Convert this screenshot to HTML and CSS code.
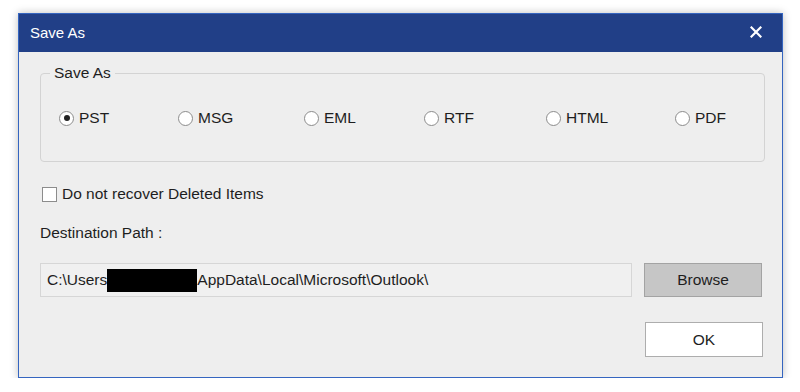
FILE: index.html
```html
<!DOCTYPE html>
<html lang="en">
<head>
    <meta charset="UTF-8">
    <title>Save As</title>
    <link rel="stylesheet" href="styles.css">
</head>
<body>

    <div class="window">
        <div class="titlebar">
            <span class="title">Save As</span>
            <svg class="close" width="12" height="12" viewBox="0 0 12 12">
                <path d="M1.5 1.5 L10.5 10.5 M10.5 1.5 L1.5 10.5" stroke="#fff" stroke-width="2.2" stroke-linecap="square"/>
            </svg>
        </div>

        <div class="content">
            <fieldset class="group">
                <legend>Save As</legend>
                <div class="options">
                    <label class="option"><span class="radio checked"></span>PST</label>
                    <label class="option"><span class="radio"></span>MSG</label>
                    <label class="option"><span class="radio"></span>EML</label>
                    <label class="option"><span class="radio"></span>RTF</label>
                    <label class="option"><span class="radio"></span>HTML</label>
                    <label class="option"><span class="radio"></span>PDF</label>
                </div>
            </fieldset>

            <label class="check-row"><span class="checkbox"></span>Do not recover Deleted Items</label>

            <div class="dest-label">Destination Path :</div>

            <div class="path-row">
                <div class="path-box">C:\Users<span class="redact"></span>AppData\Local\Microsoft\Outlook\</div>
                <button class="btn btn-browse">Browse</button>
            </div>

            <div class="ok-row">
                <button class="btn btn-ok">OK</button>
            </div>
        </div>
    </div>

</body>
</html>
```

FILE: styles.css
```css
body {
    margin: 0;
    background: #fff;
    font-family: 'Liberation Sans', Arial, sans-serif;
    font-size: 15.5px;
    color: #1e1e1e;
}

.window {
    margin: 13px 0 0 18px;
    width: 763px;
    height: 363px;
    border: 1px solid #3565c0;
    background: #eeeeee;
    box-shadow: 0 0 8px rgba(0, 0, 0, 0.25);
    display: flex;
    flex-direction: column;
}

.titlebar {
    height: 36px;
    background: #213f87;
    color: #fff;
    display: flex;
    align-items: center;
    justify-content: space-between;
    padding: 0 20px 2px 11px;
}

.title {
    font-size: 15px;
}

.content {
    padding: 12px 17px 0 21px;
}

/* group box */
.group {
    margin: 0;
    padding: 0;
    border: 1px solid #d3d3d3;
    border-radius: 4px;
}

.group legend {
    margin-left: 9px;
    padding: 0 4px;
    line-height: 18px;
}

.options {
    display: grid;
    grid-template-columns: 119px 126px 120px 122px 129px auto;
    padding: 27px 0 34px 18px;
}

.option {
    display: flex;
    align-items: center;
    height: 18px;
}

.radio {
    width: 13px;
    height: 13px;
    border: 1px solid #8c8c8c;
    border-radius: 50%;
    background: #fff;
    margin-right: 5px;
    display: flex;
    align-items: center;
    justify-content: center;
}

.radio.checked::after {
    content: "";
    width: 6px;
    height: 6px;
    border-radius: 50%;
    background: #222;
}

/* checkbox */
.check-row {
    display: flex;
    align-items: center;
    margin-top: 24px;
    margin-left: 2px;
    height: 16px;
}

.checkbox {
    width: 13px;
    height: 13px;
    border: 1px solid #8c8c8c;
    background: #fff;
    margin-right: 5px;
}

.dest-label {
    margin-top: 22px;
    line-height: 18px;
}

/* path row */
.path-row {
    display: flex;
    margin-top: 21px;
    gap: 12px;
}

.path-box {
    width: 592px;
    height: 34px;
    box-sizing: border-box;
    border: 1px solid #d6d6d6;
    background: #f0f0f0;
    padding: 0 6px;
    display: flex;
    align-items: center;
    white-space: nowrap;
}

.redact {
    display: inline-block;
    width: 90px;
    height: 23px;
    background: #000;
}

.btn {
    width: 118px;
    height: 34px;
    font-family: 'Liberation Sans', Arial, sans-serif;
    font-size: 15.5px;
    color: #1e1e1e;
    border: 1px solid #a3a3a3;
    padding: 0;
}

.btn-browse {
    background: #c6c6c6;
}

.ok-row {
    display: flex;
    justify-content: flex-end;
    margin-top: 25px;
    padding-right: 2px;
}

.btn-ok {
    background: #fff;
    height: 35px;
    border-color: #adadad;
}
```
